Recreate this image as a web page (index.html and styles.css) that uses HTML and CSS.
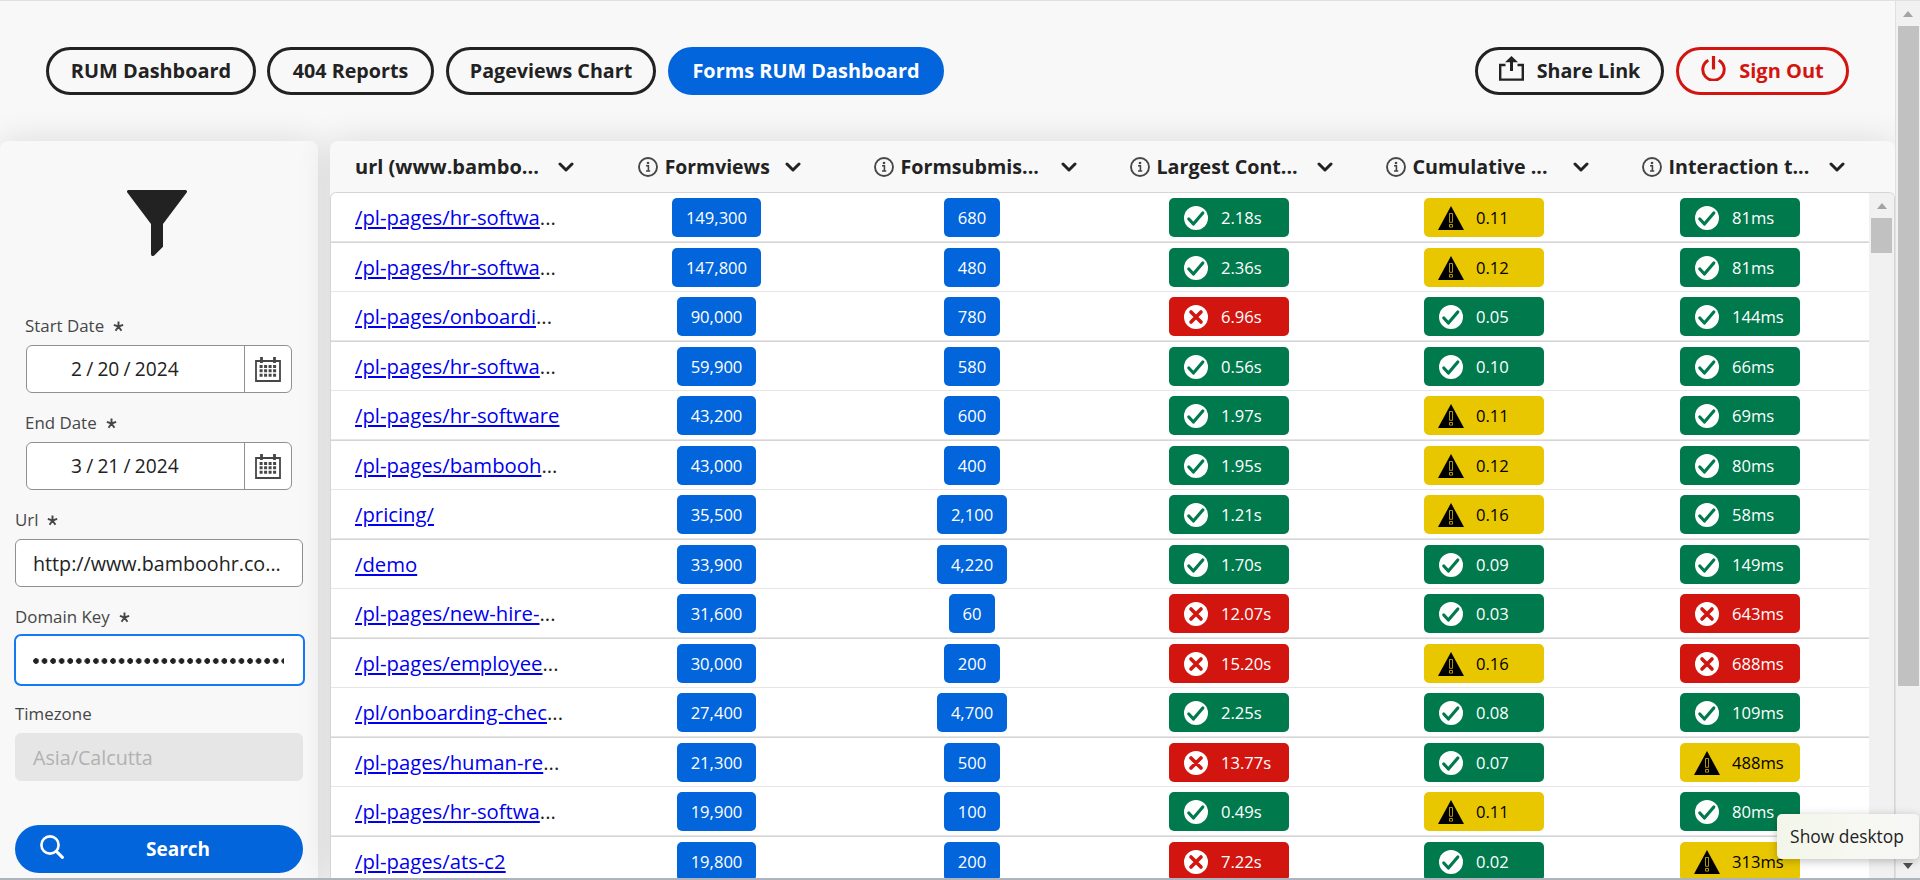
FILE: index.html
```html
<!DOCTYPE html>
<html lang="en">
<head>
<meta charset="utf-8">
<title>Forms RUM Dashboard</title>
<link rel="stylesheet" href="styles.css">
</head>
<body>
<svg class="defs" aria-hidden="true">
  <symbol id="i-good" viewBox="0 0 24 24"><circle cx="12" cy="12" r="12" fill="#fff"/><path d="M4.8 13 9.4 18 18.8 7" fill="none" stroke="#007a4d" stroke-width="3.2" stroke-linecap="round" stroke-linejoin="round"/></symbol>
  <symbol id="i-bad" viewBox="0 0 24 24"><circle cx="12" cy="12" r="12" fill="#fff"/><path d="M7 7 17 17M17 7 7 17" fill="none" stroke="#d31510" stroke-width="3.6" stroke-linecap="round"/></symbol>
  <symbol id="i-warn" viewBox="0 0 26 24"><path d="M13 0 26 24H0Z" fill="#000"/><path d="M11.5 7.5h3v8.8h-3zM11.5 18.5h3v2.6h-3z" fill="none" stroke="#e8c600" stroke-width=".75"/></symbol>
  <symbol id="i-info" viewBox="0 0 20 20"><circle cx="10" cy="10" r="9" fill="none" stroke="#464646" stroke-width="1.9"/><path d="M8 8.7h2.4v5M8 14h4.2" fill="none" stroke="#464646" stroke-width="1.6"/><circle cx="10" cy="6" r="1.3" fill="#464646"/></symbol>
  <symbol id="i-chev" viewBox="0 0 16 10"><path d="M2 2 8 8 14 2" fill="none" stroke="#222" stroke-width="3" stroke-linecap="round" stroke-linejoin="round"/></symbol>
  <symbol id="i-cal" viewBox="0 0 26 25"><path d="M1 4h24v20H1z" fill="none" stroke="#464646" stroke-width="1.8"/><path d="M6.5 0v6M19.5 0v6" stroke="#464646" stroke-width="2.8"/><path d="M4.6 9.4h17M4.6 13.8h17M4.6 18.2h17" stroke="#464646" stroke-width="3" stroke-dasharray="3 1.5"/></symbol>
  <symbol id="i-star" viewBox="0 0 12 12"><path d="M6 6V.6M6 6 .9 4.3M6 6 11.1 4.3M6 6 2.8 10.6M6 6 9.2 10.6" fill="none" stroke="#464646" stroke-width="2.1"/></symbol>
</svg>
<div class="app">
  <header class="top">
    <nav class="nav">
      <a class="btn b-rum">RUM Dashboard</a>
      <a class="btn b-404">404 Reports</a>
      <a class="btn b-pv">Pageviews Chart</a>
      <a class="btn b-forms active">Forms RUM Dashboard</a>
    </nav>
    <div class="nav">
      <a class="btn b-share"><svg class="ic-share" viewBox="0 0 25 25"><path d="M6.5 9H1.2v14.6h22.6V9h-5.3" fill="none" stroke="#222" stroke-width="2.4"/><path d="M12.5 15V4" stroke="#222" stroke-width="3"/><path d="M12.5 0 19 6.2H6z" fill="#222"/></svg><span>Share Link</span></a>
      <a class="btn b-out"><svg class="ic-power" viewBox="0 0 25 25"><path d="M12.5 0v13.4" stroke="#d31510" stroke-width="3.2"/><path d="M7.3 4.2A10.7 10.7 0 1 0 17.7 4.2" fill="none" stroke="#d31510" stroke-width="3"/></svg><span>Sign Out</span></a>
    </div>
  </header>
  <main class="body">
    <aside class="side">
      <svg class="funnel" viewBox="0 0 60 66"><path d="M1.6 0H58.4a1.6 1.6 0 0 1 1.3 2.6L36 34V56.8L27.2 65.4Q24 67 24 64V34L.3 2.6A1.6 1.6 0 0 1 1.6 0Z" fill="#222"/></svg>
      <div class="field inset">
        <label>Start Date <svg class="star"><use href="#i-star"/></svg></label>
        <div class="box date"><span>2</span><i>/</i><span>20</span><i>/</i><span>2024</span><b><svg class="cal"><use href="#i-cal"/></svg></b></div>
      </div>
      <div class="field inset">
        <label>End Date <svg class="star"><use href="#i-star"/></svg></label>
        <div class="box date"><span>3</span><i>/</i><span>21</span><i>/</i><span>2024</span><b><svg class="cal"><use href="#i-cal"/></svg></b></div>
      </div>
      <div class="field">
        <label>Url <svg class="star"><use href="#i-star"/></svg></label>
        <div class="box">http://www.bamboohr.co...</div>
      </div>
      <div class="field">
        <label>Domain Key <svg class="star"><use href="#i-star"/></svg></label>
        <div class="box focus"><div class="dots"></div></div>
      </div>
      <div class="field">
        <label>Timezone</label>
        <div class="box off">Asia/Calcutta</div>
      </div>
      <button class="search"><svg viewBox="0 0 24 24"><circle cx="10" cy="10" r="8.6" fill="none" stroke="#fff" stroke-width="2.6"/><path d="M16.4 16.4 22.4 22.4" stroke="#fff" stroke-width="3" stroke-linecap="round"/></svg><span>Search</span></button>
    </aside>
    <section class="table">
      <div class="thead">
        <div class="th first"><span>url (www.bambo...</span><svg class="chev"><use href="#i-chev"/></svg></div>
        <div class="th mid"><svg class="info"><use href="#i-info"/></svg><span>Formviews</span><svg class="chev"><use href="#i-chev"/></svg></div>
        <div class="th"><svg class="info"><use href="#i-info"/></svg><span>Formsubmis...</span><svg class="chev"><use href="#i-chev"/></svg></div>
        <div class="th"><svg class="info"><use href="#i-info"/></svg><span>Largest Cont...</span><svg class="chev"><use href="#i-chev"/></svg></div>
        <div class="th"><svg class="info"><use href="#i-info"/></svg><span>Cumulative ...</span><svg class="chev"><use href="#i-chev"/></svg></div>
        <div class="th"><svg class="info"><use href="#i-info"/></svg><span>Interaction t...</span><svg class="chev"><use href="#i-chev"/></svg></div>
      </div>
      <div class="tbody">
        <div class="rows" id="rows"></div>
        <div class="bar inner"><i class="up"></i><div class="thumb"></div></div>
      </div>
    </section>
  </main>
</div>
<div class="bar outer"><i class="up"></i><div class="thumb"></div><i class="down"></i></div>
<div class="tip">Show desktop</div>
<script src="script.js"></script>
</body>
</html>
```
FILE: styles.css
```css
* { box-sizing: border-box; }
body { margin: 0; width: 1920px; height: 880px; overflow: hidden; display: flex; background: #f8f8f8; color: #222; font: 19.7px/26px "Open Sans", "Noto Sans", sans-serif; border-top: 1px solid #e0e0e0; border-bottom: 2px solid #aeb4be; position: relative; }
.defs { position: absolute; width: 0; height: 0; }
svg { display: block; flex: none; }
.app { width: 1895px; display: flex; flex-direction: column; overflow: hidden; }
.top { flex: none; height: 140px; padding: 46px 46px 0; display: flex; justify-content: space-between; }
.nav { display: flex; gap: 12px; }
.btn { height: 48px; border: 3px solid #222; border-radius: 24px; display: flex; align-items: center; justify-content: center; font-weight: 700; white-space: nowrap; }
.b-rum { width: 210px; margin-right: -1px; font-size: 19.9px; }
.b-404 { width: 167px; font-size: 19.7px; }
.b-pv { width: 210px; }
.b-forms { width: 276px; font-size: 19.9px; }
.active { background: #0265dc; border-color: #0265dc; color: #fff; }
.b-share { width: 189px; gap: 13px; }
.b-out { width: 173px; gap: 13px; color: #d31510; border-color: #d31510; }
.b-out span { font-size: 20px; }
.ic-share, .ic-power { width: 25px; height: 25px; margin-top: -5px; }
.body { flex: none; height: 737px; display: flex; gap: 12px; }
.side { width: 318px; height: 800px; background: #f8f8f8; border-radius: 8px 8px 0 0; box-shadow: 0 0 34px rgba(0,0,0,.12); padding: 49px 15px 0; }
.funnel { width: 60px; height: 66px; margin: 0 auto 54px 112px; }
.field { height: 97px; }
.inset { padding: 0 11px; }
label { display: flex; align-items: center; gap: 9px; height: 35px; padding: 0 0 4px; font-size: 16.9px; color: #464646; }
.inset label { margin-left: -1px; }
.star { width: 11px; height: 11px; margin-top: 1px; }
.box { height: 48px; border: 1px solid #909090; border-radius: 6px; background: #fff; padding: 1px 16px 0 17px; display: flex; align-items: center; white-space: nowrap; }
.inset .box { width: 266px; }
.date { padding: 0 0 0 44px; font-size: 19.2px; }
.date i { font-style: normal; width: 15.4px; text-align: center; }
.date b { margin-left: auto; width: 47px; height: 46px; border-left: 1px solid #909090; display: grid; place-items: center; }
.cal { width: 26px; height: 25px; }
.focus { height: 52px; margin: -2px -1.5px; border: 2px solid #147af3; border-radius: 7px; }
.dots { width: 251px; height: 6px; background: radial-gradient(circle at 3px 3px, #222 2.5px, transparent 3.1px) 0 0/8.57px 6px repeat-x; }
.off { background: #e6e6e6; border-color: #e6e6e6; color: #b1b1b1; }
.search { width: 288px; height: 48px; margin-top: 30px; border: 0; border-radius: 24px; background: #0265dc; color: #fff; font: 700 19px/26px "Open Sans", sans-serif; padding: 0 25px; display: flex; align-items: center; }
.search svg { width: 24px; height: 24px; margin-top: -4px; }
.search span { flex: 1; padding-left: 14px; }
.table { width: 1565px; height: 737px; border-radius: 8px 8px 0 0; box-shadow: 0 0 34px rgba(0,0,0,.12); background: #f8f8f8; display: flex; flex-direction: column; overflow: hidden; }
.thead, .row { display: grid; grid-template-columns: 258px repeat(5, 256px); }
.thead { flex: none; height: 51px; align-items: center; font-weight: 700; }
.th { display: flex; align-items: center; padding: 0 23px 0 30px; white-space: nowrap; }
.th span { flex: 1; }
.th.first { padding: 1px 14px 0 25px; font-size: 20px; }
.th.mid { justify-content: center; }
.th.mid span { flex: none; font-size: 19.4px; margin-right: 15px; }
.info { width: 20px; height: 20px; margin-right: 6.5px; }
.chev { width: 16px; height: 10px; }
.tbody { flex: 1; border: 1px solid #d5d5d5; border-bottom: 0; border-radius: 6px 6px 0 0; display: flex; background: #fff; overflow: hidden; }
.rows { width: 1538px; }
.row { height: 49px; border-bottom: 1px solid #e6e6e6; margin-left: -1px; }
.row:nth-child(odd) { height: 50px; border-bottom: 1px solid #d5d5d5; box-shadow: inset 0 -1px #e6e6e6; }
.cell { display: flex; justify-content: center; padding-top: 5px; }
.cell:nth-child(2) { padding-left: 1px; }
.cell:nth-child(4) { padding-left: 2px; }
.url { padding: 11px 0 0 25px; font-size: 20.3px; white-space: nowrap; }
.url a { color: #0000ee; text-decoration: underline; text-decoration-thickness: 2px; text-underline-offset: 2px; }
.badge { height: 39px; border-radius: 5px; font-size: 16.6px; color: #fff; background: #0265dc; padding: 0 13.7px; display: flex; align-items: center; }
.metric { width: 120px; padding: 0 0 0 14px; gap: 12px; }
.metric svg { width: 26px; height: 24px; }
.good { background: #007a4d; }
.bad { background: #d31510; }
.warn { background: #e8c600; color: #000; }
.bar { background: #f1f1f1; display: flex; flex-direction: column; align-items: center; }
.bar i { border: 5.5px solid transparent; }
.bar .up { border-top: 0; border-bottom: 6px solid #a3a3a3; }
.bar .down { border-bottom: 0; border-top: 6px solid #505050; margin: auto 0 9px; }
.thumb { background: #c1c1c1; width: 21px; }
.inner { flex: 1; padding-top: 10px; }
.inner .thumb { height: 35px; margin-top: 9px; }
.outer { width: 25px; border-left: 1px solid #e0e0e0; padding-top: 10px; }
.outer .thumb { height: 660px; margin-top: 9px; }
.tip { position: absolute; left: 1777px; top: 813px; width: 142px; height: 45px; border-radius: 5px; background: linear-gradient(100deg, #f2f6e9, #f7f8f2 60%, #f6f6f6); box-shadow: 0 2px 10px rgba(0,0,0,.25); font-size: 17.4px; line-height: 45px; text-align: center; text-indent: -2px; color: #222; }
```
FILE: script.js
```js
const data = [
  ["/pl-pages/hr-softwa", 1, "149,300", "680", "g2.18s", "w0.11", "g81ms"],
  ["/pl-pages/hr-softwa", 1, "147,800", "480", "g2.36s", "w0.12", "g81ms"],
  ["/pl-pages/onboardi", 1, "90,000", "780", "b6.96s", "g0.05", "g144ms"],
  ["/pl-pages/hr-softwa", 1, "59,900", "580", "g0.56s", "g0.10", "g66ms"],
  ["/pl-pages/hr-software", 0, "43,200", "600", "g1.97s", "w0.11", "g69ms"],
  ["/pl-pages/bambooh", 1, "43,000", "400", "g1.95s", "w0.12", "g80ms"],
  ["/pricing/", 0, "35,500", "2,100", "g1.21s", "w0.16", "g58ms"],
  ["/demo", 0, "33,900", "4,220", "g1.70s", "g0.09", "g149ms"],
  ["/pl-pages/new-hire-", 1, "31,600", "60", "b12.07s", "g0.03", "b643ms"],
  ["/pl-pages/employee", 1, "30,000", "200", "b15.20s", "w0.16", "b688ms"],
  ["/pl/onboarding-chec", 1, "27,400", "4,700", "g2.25s", "g0.08", "g109ms"],
  ["/pl-pages/human-re", 1, "21,300", "500", "b13.77s", "g0.07", "w488ms"],
  ["/pl-pages/hr-softwa", 1, "19,900", "100", "g0.49s", "w0.11", "g80ms"],
  ["/pl-pages/ats-c2", 0, "19,800", "200", "b7.22s", "g0.02", "w313ms"]
];
const kinds = { g: "good", b: "bad", w: "warn" };
const count = v => `<div class="cell"><span class="badge">${v}</span></div>`;
const metric = v => {
  const k = kinds[v[0]];
  return `<div class="cell"><span class="badge metric ${k}"><svg><use href="#i-${k}"/></svg>${v.slice(1)}</span></div>`;
};
document.getElementById("rows").innerHTML = data.map(([url, cut, views, subs, ...vitals]) =>
  `<div class="row"><div class="url"><a>${url}</a>${cut ? "..." : ""}</div>${count(views)}${count(subs)}${vitals.map(metric).join("")}</div>`
).join("");
```
